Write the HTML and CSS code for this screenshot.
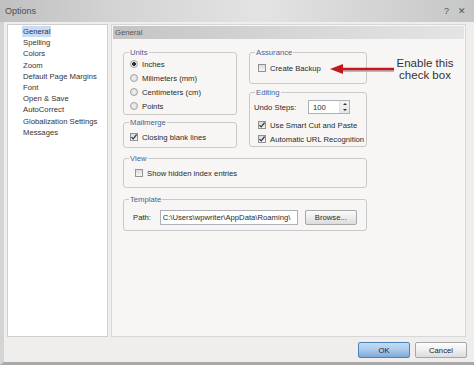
FILE: index.html
```html
<!DOCTYPE html>
<html lang="en">
  <head>
    <meta charset="UTF-8" />
    <title>Options</title>
    <link rel="stylesheet" href="styles.css">
  </head>
  <body>
    <div class="window">
      <div class="titlebar">
        <span>Options</span>
        <span class="controls"><span>?</span><span>✕</span></span>
      </div>

      <div class="frame">
        <div class="content">
          <ul class="nav">
            <li><span class="selected">General</span></li>
            <li>Spelling</li>
            <li>Colors</li>
            <li>Zoom</li>
            <li>Default Page Margins</li>
            <li>Font</li>
            <li>Open &amp; Save</li>
            <li>AutoCorrect</li>
            <li>Globalization Settings</li>
            <li>Messages</li>
          </ul>

          <div class="panel">
            <div class="panel-head">General</div>

            <div class="panel-body">
              <div class="cols">
                <div class="col">
                  <div class="group units">
                    <span class="legend">Units</span>
                    <div class="row"><span class="radio on"></span>Inches</div>
                    <div class="row"><span class="radio"></span>Milimeters (mm)</div>
                    <div class="row"><span class="radio"></span>Centimeters (cm)</div>
                    <div class="row"><span class="radio"></span>Points</div>
                  </div>
                  <div class="group mailmerge">
                    <span class="legend">Mailmerge</span>
                    <div class="row">
                      <span class="check"><svg viewBox="0 0 8 8" width="8" height="8"><path d="M1.4 4.1 L3.2 5.9 L6.6 1.7" /></svg></span>Closing blank lines
                    </div>
                  </div>
                </div>

                <div class="col">
                  <div class="group assurance">
                    <span class="legend">Assurance</span>
                    <div class="row"><span class="check"></span>Create Backup</div>
                  </div>
                  <div class="group editing">
                    <span class="legend">Editing</span>
                    <div class="row">
                      <span class="undo-label">Undo Steps:</span>
                      <span class="spin">
                        <span class="spin-value">100</span>
                        <span class="spin-arrows"><span class="up"></span><span class="down"></span></span>
                      </span>
                    </div>
                    <div class="row indent first">
                      <span class="check"><svg viewBox="0 0 8 8" width="8" height="8"><path d="M1.4 4.1 L3.2 5.9 L6.6 1.7" /></svg></span>Use Smart Cut and Paste
                    </div>
                    <div class="row indent">
                      <span class="check"><svg viewBox="0 0 8 8" width="8" height="8"><path d="M1.4 4.1 L3.2 5.9 L6.6 1.7" /></svg></span>Automatic URL Recognition
                    </div>
                  </div>
                </div>
              </div>

              <div class="group view">
                <span class="legend">View</span>
                <div class="row"><span class="check"></span>Show hidden index entries</div>
              </div>

              <div class="group template">
                <span class="legend">Template</span>
                <div class="row tall">
                  <span class="path-label">Path:</span>
                  <span class="path">C:\Users\wpwriter\AppData\Roaming\</span>
                  <span class="browse">Browse...</span>
                </div>
              </div>
            </div>

            <!-- callout drawn over the screenshot -->
            <svg class="arrow" viewBox="0 0 68 14" width="68" height="14">
              <line x1="12" y1="8" x2="66" y2="8" stroke="#b9b9b9" stroke-width="2" />
              <line x1="12" y1="6" x2="66" y2="6" stroke="#c4161c" stroke-width="2.6" />
              <polygon points="2,6 15,1 15,11" fill="#c4161c" />
            </svg>
            <div class="note">Enable this<br>check box</div>
          </div>
        </div>

        <div class="footer">
          <button class="btn ok">OK</button>
          <button class="btn">Cancel</button>
        </div>
      </div>
    </div>
  </body>
</html>
```

FILE: styles.css
```css
body {
  margin: 0;
  font-family: "Liberation Sans", Arial, sans-serif;
  font-size: 7.7px;
  color: #2a2a2a;
  background-color: #efeeec;
}
.window {
  width: 474px;
  height: 365px;
  display: flex;
  flex-direction: column;
  background-color: #efeeec;
  overflow: hidden;
}
.titlebar {
  height: 22px;
  flex: none;
  display: flex;
  align-items: center;
  justify-content: space-between;
  padding: 0 8px 0 5px;
  font-size: 9px;
  color: #4d4d4d;
  background: linear-gradient(90deg, #c0c0c0, #d4d4d4 25%, #e3e3e3 55%, #d0d0d0 85%, #c6c6c6);
}
.controls {
  display: flex;
  gap: 9px;
  color: #555;
}
.frame {
  flex: 1;
  display: flex;
  flex-direction: column;
  border-left: 4px solid #d4d4d4;
  border-bottom: 3px solid #a9a9a9;
}
.content {
  height: 315px;
  display: flex;
  gap: 3px;
  padding: 2px 8px 0 3px;
  box-sizing: border-box;
}
.nav {
  width: 101px;
  flex: none;
  box-sizing: border-box;
  margin: 0;
  padding: 1px 0 0 15px;
  list-style: none;
  background-color: #fff;
  border: 1px solid #cfcfcf;
  line-height: 11.2px;
  color: #333;
}
.nav .selected {
  background-color: #c9dcf2;
  color: #1e3563;
  padding: 1px;
  margin-left: -1px;
}
.panel {
  flex: 1;
  position: relative;
  background-color: #f7f6f4;
  border: 1px solid #d7d7d7;
}
.panel-head {
  margin: 1px;
  height: 13px;
  line-height: 13px;
  padding-left: 2px;
  color: #555;
  background: linear-gradient(90deg, #c4c4c4, #d6d6d6 50%, #e4e4e4);
}
.panel-body {
  width: 244px;
  padding: 12px 0 0 11px;
}
.cols {
  display: grid;
  grid-template-columns: 114px 118px;
  gap: 12px;
  align-items: start;
}
.col {
  display: flex;
  flex-direction: column;
}
.group {
  position: relative;
  box-sizing: border-box;
  border: 1px solid #c9c9c9;
  border-radius: 3px;
}
.legend {
  position: absolute;
  top: -5px;
  left: 5px;
  padding: 0 1px;
  line-height: 9px;
  color: #4a6296;
  background-color: #f7f6f4;
}
.row {
  height: 14px;
  display: flex;
  align-items: center;
  gap: 4px;
  white-space: nowrap;
}
.units {
  height: 63px;
  padding: 4px 6px 1px;
}
.mailmerge {
  height: 26px;
  margin-top: 7px;
  padding: 7px 6px 3px;
}
.assurance {
  height: 32px;
  padding: 8px 8px;
}
.editing {
  height: 55px;
  margin-top: 8px;
  padding: 7px 4px 0;
}
.editing .indent {
  padding-left: 4px;
}
.editing .first {
  margin-top: 4px;
}
.view {
  height: 30px;
  margin-top: 10px;
  padding: 7px 11px;
}
.template {
  height: 32px;
  margin-top: 11px;
  padding: 10px 9px 5px;
}
.row.tall {
  height: 15px;
  gap: 0;
}
.radio {
  width: 8px;
  height: 8px;
  flex: none;
  box-sizing: border-box;
  border-radius: 50%;
  border: 1px solid #a3a3a3;
  background: radial-gradient(circle, #f4f4f4 0, #d9d9d9 100%);
}
.radio.on {
  background: radial-gradient(circle, #2e2e2e 0 1.6px, #f0f0f0 2.2px, #d9d9d9 100%);
}
.check {
  width: 8px;
  height: 8px;
  flex: none;
  box-sizing: border-box;
  border: 1px solid #929292;
  background: linear-gradient(#dadada, #f7f7f7);
  position: relative;
}
.check svg {
  position: absolute;
  left: -1px;
  top: -1px;
}
.check path {
  fill: none;
  stroke: #333;
  stroke-width: 1.3;
}
.undo-label {
  width: 54px;
}
.spin {
  width: 42px;
  height: 14px;
  box-sizing: border-box;
  display: flex;
  justify-content: space-between;
  align-items: center;
  border: 1px solid #adb0b6;
  background-color: #fff;
  margin-left: -4px;
}
.spin-value {
  padding-left: 4px;
}
.spin-arrows {
  width: 9px;
  height: 12px;
  display: flex;
  flex-direction: column;
  align-items: center;
  justify-content: space-around;
  border-left: 1px solid #e2e2e2;
  background: linear-gradient(#f6f6f6, #e6e6e6);
}
.up {
  border-left: 2px solid transparent;
  border-right: 2px solid transparent;
  border-bottom: 2px solid #333;
}
.down {
  border-left: 2px solid transparent;
  border-right: 2px solid transparent;
  border-top: 2px solid #333;
}
.path-label {
  width: 27px;
}
.path {
  width: 140px;
  height: 15px;
  box-sizing: border-box;
  padding: 0 2px;
  line-height: 13px;
  overflow: hidden;
  border: 1px solid #adb0b6;
  background-color: #fff;
}
.browse {
  width: 53px;
  height: 15px;
  margin-left: 7px;
  box-sizing: border-box;
  text-align: center;
  line-height: 13px;
  border: 1px solid #a8a8a8;
  border-radius: 2px;
  background: linear-gradient(#fbfbfb, #ececec 50%, #dcdcdc);
}
.arrow {
  position: absolute;
  left: 216px;
  top: 38px;
}
.note {
  position: absolute;
  left: 278px;
  top: 32px;
  width: 70px;
  text-align: center;
  font-size: 11.5px;
  line-height: 12px;
  color: #333;
}
.footer {
  flex: 1;
  display: flex;
  justify-content: flex-end;
  align-items: flex-start;
  gap: 5px;
  padding: 5px 7px 0 0;
}
.btn {
  width: 52px;
  height: 16px;
  padding: 0;
  font-family: "Liberation Sans", Arial, sans-serif;
  font-size: 7.7px;
  color: #222;
  border: 1px solid #a6a6a6;
  border-radius: 2px;
  background: linear-gradient(#fdfdfd, #efefef 50%, #dcdcdc);
}
.btn.ok {
  border-color: #4a83b8;
  background: linear-gradient(#c6dcf3, #a9c9ec 50%, #7ea9da);
}
```
